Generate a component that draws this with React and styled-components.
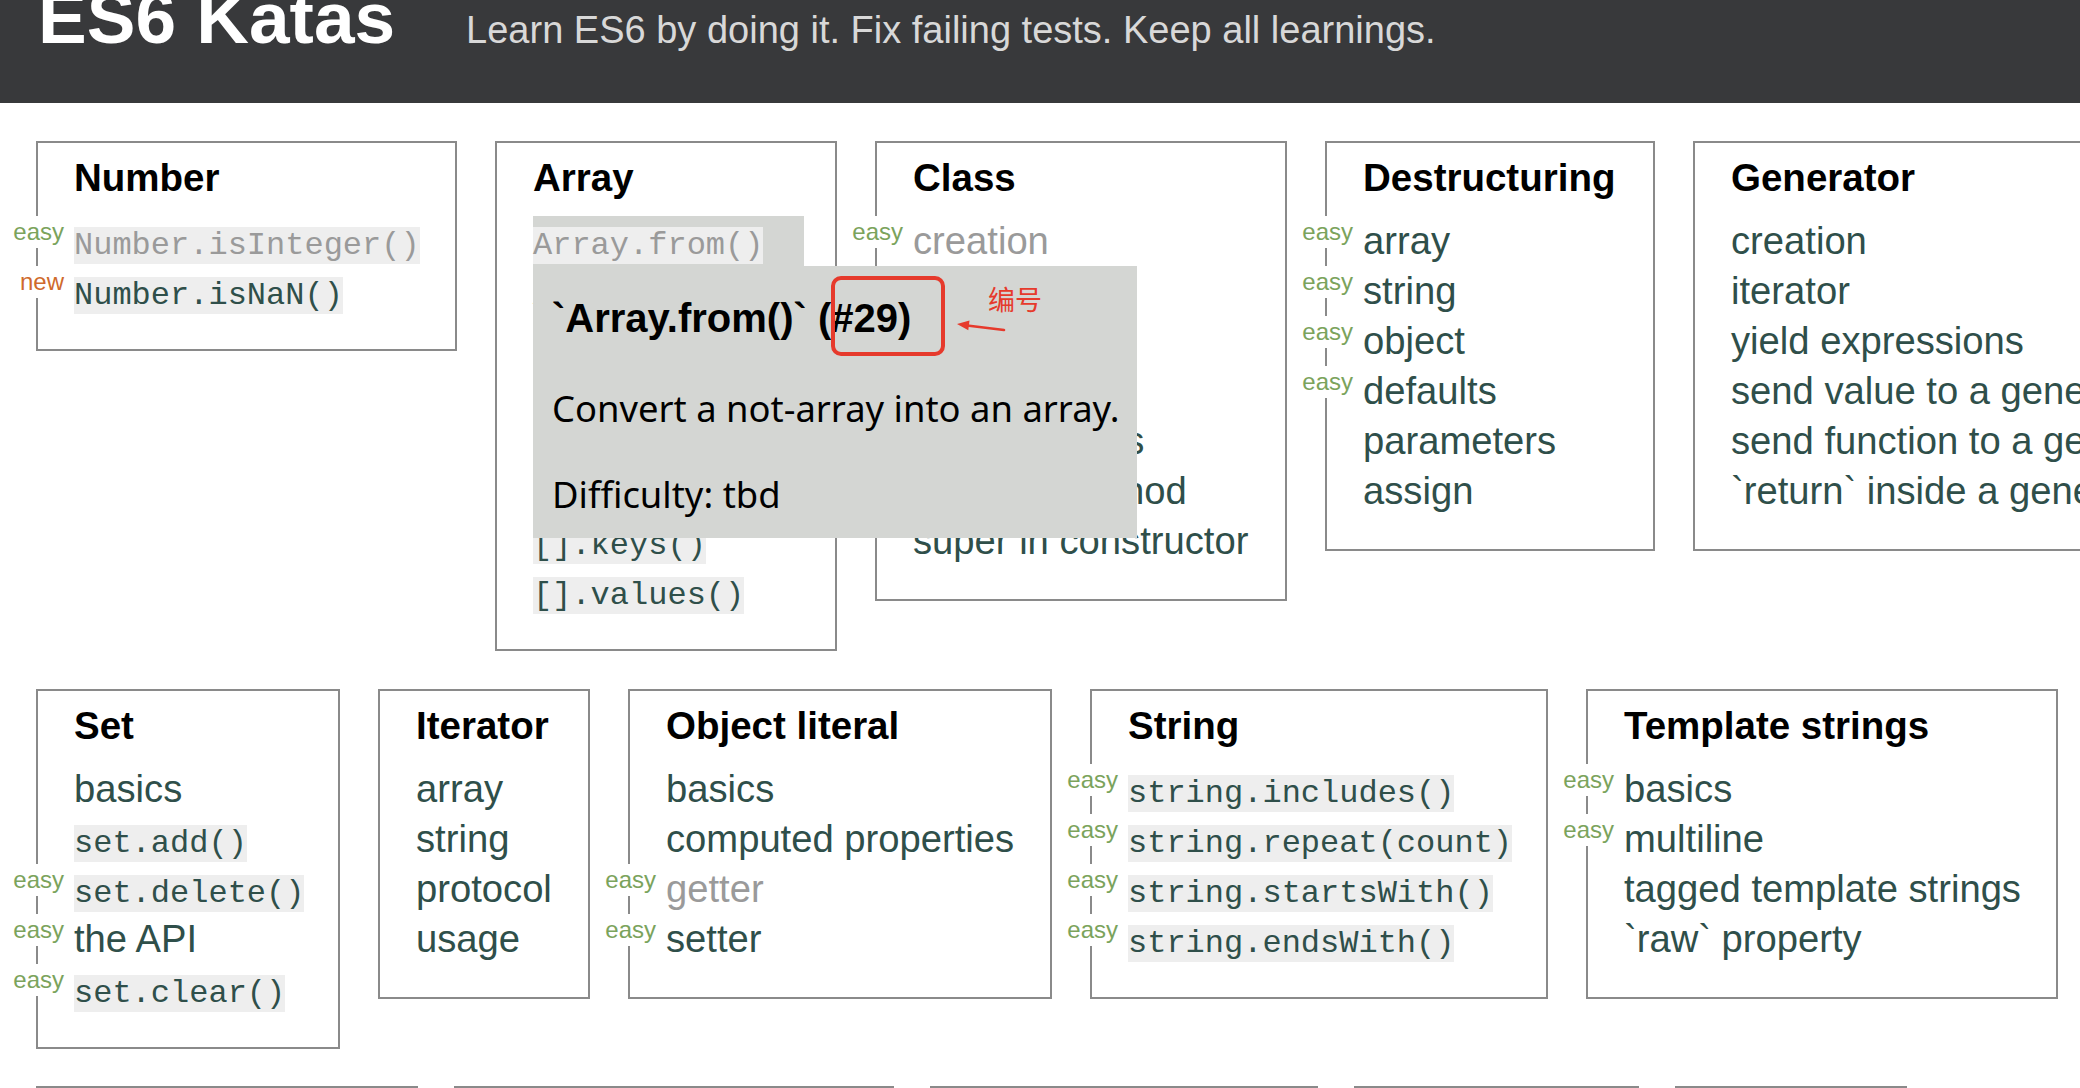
import React from 'react';
import styled, { createGlobalStyle } from 'styled-components';

const GlobalStyle = createGlobalStyle`
  html, body {
    margin: 0;
    padding: 0;
    background: #fff;
    overflow: hidden;
  }
  body {
    font-family: "Liberation Sans", Arial, Helvetica, sans-serif;
  }
`;

const rows = [
  {
    gap: 38,
    cards: [
      {
        title: 'Number', width: 421, items: [
          { text: 'Number.isInteger()', code: true, label: 'easy', done: true },
          { text: 'Number.isNaN()', code: true, label: 'new' },
        ],
      },
      {
        title: 'Array', width: 342, items: [
          { text: 'Array.from()', code: true, done: true, hovered: true },
          { text: 'Array.of()', code: true },
          { text: '[].fill()', code: true },
          { text: '[].find()', code: true },
          { text: '[].findIndex()', code: true },
          { text: '[].entries()', code: true },
          { text: '[].keys()', code: true },
          { text: '[].values()', code: true },
        ],
      },
      {
        title: 'Class', width: 412, items: [
          { text: 'creation', label: 'easy', done: true },
          { text: 'accessors' },
          { text: 'static' },
          { text: 'extends' },
          { text: 'more extends' },
          { text: 'super in method' },
          { text: 'super in constructor' },
        ],
      },
      {
        title: 'Destructuring', width: 330, items: [
          { text: 'array', label: 'easy' },
          { text: 'string', label: 'easy' },
          { text: 'object', label: 'easy' },
          { text: 'defaults', label: 'easy' },
          { text: 'parameters' },
          { text: 'assign' },
        ],
      },
      {
        title: 'Generator', width: 640, items: [
          { text: 'creation' },
          { text: 'iterator' },
          { text: 'yield expressions' },
          { text: 'send value to a generator' },
          { text: 'send function to a generator' },
          { text: '`return` inside a generator function' },
        ],
      },
    ],
  },
  {
    gap: 38,
    cards: [
      {
        title: 'Set', width: 304, items: [
          { text: 'basics' },
          { text: 'set.add()', code: true },
          { text: 'set.delete()', code: true, label: 'easy' },
          { text: 'the API', label: 'easy' },
          { text: 'set.clear()', code: true, label: 'easy' },
        ],
      },
      {
        title: 'Iterator', width: 212, items: [
          { text: 'array' },
          { text: 'string' },
          { text: 'protocol' },
          { text: 'usage' },
        ],
      },
      {
        title: 'Object literal', width: 424, items: [
          { text: 'basics' },
          { text: 'computed properties' },
          { text: 'getter', label: 'easy', done: true },
          { text: 'setter', label: 'easy' },
        ],
      },
      {
        title: 'String', width: 458, items: [
          { text: 'string.includes()', code: true, label: 'easy' },
          { text: 'string.repeat(count)', code: true, label: 'easy' },
          { text: 'string.startsWith()', code: true, label: 'easy' },
          { text: 'string.endsWith()', code: true, label: 'easy' },
        ],
      },
      {
        title: 'Template strings', width: 472, items: [
          { text: 'basics', label: 'easy' },
          { text: 'multiline', label: 'easy' },
          { text: 'tagged template strings' },
          { text: '`raw` property' },
        ],
      },
    ],
  },
  {
    gap: 36,
    cards: [
      {
        title: 'Arrow functions', width: 382, items: [
          { text: 'basics' },
          { text: 'function binding' },
        ],
      },
      {
        title: 'Block scope', width: 440, items: [
          { text: '`let` declaration' },
          { text: '`const` declaration' },
        ],
      },
      {
        title: 'Default parameters', width: 388, items: [
          { text: 'basics' },
        ],
      },
      {
        title: 'Map', width: 285, items: [
          { text: 'basics' },
        ],
      },
      {
        title: 'Promise', width: 232, items: [
          { text: 'basics' },
        ],
      },
    ],
  },
];

function Tooltip() {
  return (
    <Tip>
      <TipTitle>`Array.from()` (#29)</TipTitle>
      <TipText>Convert a not-array into an array.</TipText>
      <TipText>Difficulty: tbd</TipText>
      <Mark />
      <Arrow width="56" height="16" viewBox="0 0 56 16">
        <line x1="51" y1="12" x2="14" y2="7.5" stroke="#e63a2c" strokeWidth="2.6" strokeLinecap="round" />
        <polygon points="4,6 16.5,2.6 15.3,12.2" fill="#e63a2c" />
      </Arrow>
      <Note>编号</Note>
    </Tip>
  );
}

function KataCard({ card }) {
  return (
    <Card width={card.width}>
      <CardTitle>{card.title}</CardTitle>
      <List>
        {card.items.map((item) => (
          <Item key={item.text} done={item.done} hovered={item.hovered}>
            {item.label && <Label kind={item.label}>{item.label}</Label>}
            {item.code ? <Code>{item.text}</Code> : item.text}
            {item.hovered && <Tooltip />}
          </Item>
        ))}
      </List>
    </Card>
  );
}

export default function App() {
  return (
    <>
      <GlobalStyle />
      <Header>
        <Title>ES6 Katas</Title>
        <Tagline>Learn ES6 by doing it. Fix failing tests. Keep all learnings.</Tagline>
      </Header>
      <Main>
        {rows.map((row, i) => (
          <Row key={i} gap={row.gap}>
            {row.cards.map((card) => (
              <KataCard key={card.title} card={card} />
            ))}
          </Row>
        ))}
      </Main>
    </>
  );
}

const Header = styled.header`
  height: 103px;
  box-sizing: border-box;
  background: #38393b;
  display: flex;
  align-items: baseline;
  padding-left: 38px;
  overflow: hidden;
`;

const Title = styled.h1`
  margin: -19px 0 0;
  font-size: 73px;
  line-height: 1;
  font-weight: 700;
  color: #fff;
  white-space: nowrap;
`;

const Tagline = styled.p`
  margin: 0 0 0 71px;
  font-size: 38px;
  line-height: 1;
  color: #d8d8d8;
  white-space: nowrap;
`;

const Main = styled.main`
  display: flex;
  flex-direction: column;
  gap: 37.5px;
  padding: 38px 0 0 36px;
`;

const Row = styled.div`
  display: flex;
  align-items: flex-start;
  gap: ${(p) => p.gap}px;
`;

const Card = styled.section`
  flex: none;
  width: ${(p) => p.width}px;
  box-sizing: border-box;
  border: 2px solid #8a8a8a;
  padding: 13px 36px 33px;
`;

const CardTitle = styled.h2`
  margin: 0 0 16px;
  font-size: 38.5px;
  line-height: 44px;
  font-weight: 700;
  color: #000;
  white-space: nowrap;
`;

const List = styled.ul`
  margin: 0;
  padding: 0;
  list-style: none;
`;

const Item = styled.li`
  position: relative;
  width: fit-content;
  height: 50px;
  line-height: 50px;
  font-size: 38.2px;
  white-space: nowrap;
  color: ${(p) => (p.done ? '#9a9a9a' : '#2f4f4a')};
  background: ${(p) => (p.hovered ? '#d4d6d3' : 'transparent')};
  padding-right: ${(p) => (p.hovered ? '41px' : '0')};
`;

const Code = styled.code`
  font-family: "Liberation Mono", "Courier New", monospace;
  font-size: 32px;
  line-height: 1;
  background: #eeeeee;
`;

const Label = styled.span`
  position: absolute;
  right: calc(100% + 8px);
  top: 0;
  height: 32px;
  line-height: 32px;
  padding: 0 2px;
  font-size: 24px;
  background: #fff;
  color: ${(p) => (p.kind === 'new' ? '#cf6a2c' : '#7ba35c')};
`;

const Tip = styled.div`
  position: absolute;
  left: 0;
  top: 100%;
  z-index: 10;
  width: 604px;
  box-sizing: border-box;
  padding: 22px 19px 14px;
  display: flex;
  flex-direction: column;
  gap: 26.5px;
  background: #d4d6d3;
  color: #000;
`;

const TipTitle = styled.div`
  font-family: "Liberation Sans", Arial, sans-serif;
  font-size: 40px;
  font-weight: 700;
  line-height: 60px;
  margin-bottom: 3px;
`;

const TipText = styled.div`
  font-family: "Noto Sans", "Liberation Sans", sans-serif;
  font-size: 36.4px;
  line-height: 60px;
`;

const Mark = styled.div`
  position: absolute;
  left: 298px;
  top: 10px;
  width: 114px;
  height: 80px;
  box-sizing: border-box;
  border: 4px solid #e63a2c;
  border-radius: 10px;
`;

const Arrow = styled.svg`
  position: absolute;
  left: 420px;
  top: 52px;
`;

const Note = styled.span`
  position: absolute;
  left: 455px;
  top: 19px;
  font-family: "Noto Sans CJK SC", sans-serif;
  font-size: 27px;
  line-height: 1;
  color: #e63a2c;
`;
